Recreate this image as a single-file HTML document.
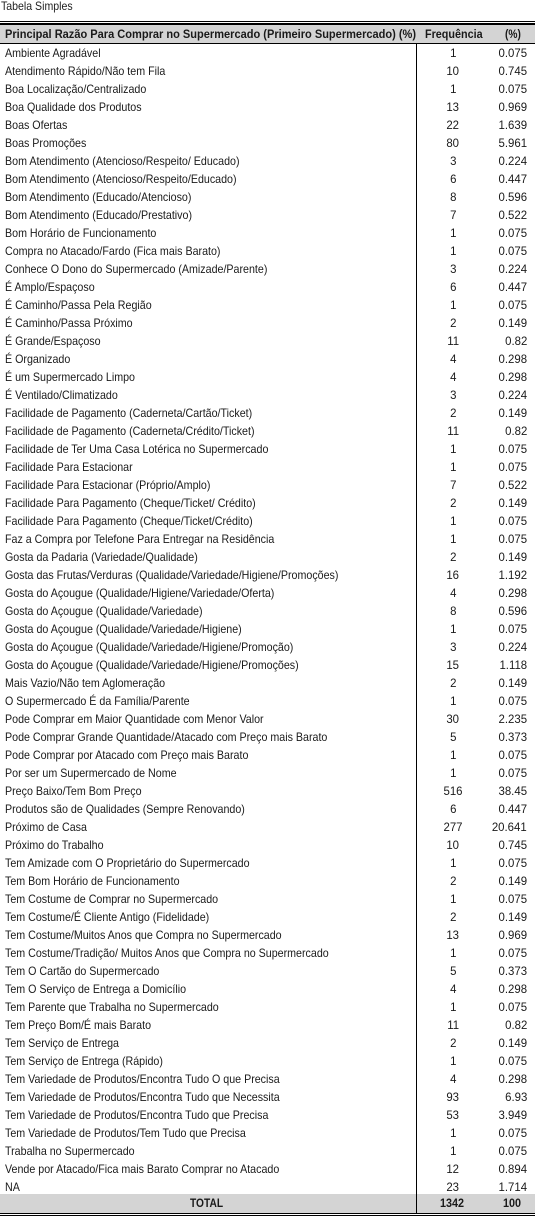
<!DOCTYPE html>
<html><head><meta charset="utf-8"><style>
html,body{margin:0;padding:0;background:#fff;width:535px;height:1216px;overflow:hidden}
body{font-family:"Liberation Sans",Arial,sans-serif;font-size:12px;color:#1a1a1a;position:relative}
.title{position:absolute;left:1px;top:-1px;line-height:14px;font-size:12px;transform:scaleX(.88);transform-origin:left;color:#222}
.dl{position:absolute;left:0;width:535px;height:1px;background:#000}
.hdr{position:absolute;left:0;top:25px;width:535px;height:18px;background:#d4d4d4;font-weight:bold}
.tot{position:absolute;left:0;top:1194px;width:535px;height:19px;background:#d4d4d4;font-weight:bold}
.vl{position:absolute;left:416px;top:43px;width:1px;height:1170px;background:#000}
table{position:absolute;left:0;top:44px;border-collapse:collapse;table-layout:fixed;width:535px}
td{height:18px;padding:0;line-height:18px;white-space:nowrap;overflow:visible;vertical-align:top}
td.a{width:411px;padding-left:5px}
td.a span,td.b span,td.c span{display:inline-block;vertical-align:top;line-height:18px;height:18px}
td.a span{transform:scaleX(.89);transform-origin:left}
td.b span{transform:scaleX(.95)}
td.c span{transform:scaleX(.95);transform-origin:right}
td.b{width:74px;text-align:center;padding-left:0}
td.c{text-align:right;padding-right:8px}
</style></head><body>
<div class="title">Tabela Simples</div>
<div class="dl" style="top:21px"></div><div class="dl" style="top:23px;height:2px"></div>
<div class="hdr">
<span style="position:absolute;left:5px;top:0;line-height:18px;display:inline-block;transform:scaleX(.92);transform-origin:left">Principal Razão Para Comprar no Supermercado (Primeiro Supermercado) (%)</span>
<span style="position:absolute;left:425px;top:0;line-height:18px;display:inline-block;transform:scaleX(.9);transform-origin:left">Frequência</span>
<span style="position:absolute;left:505px;top:0;line-height:18px;display:inline-block;transform:scaleX(.85);transform-origin:left">(%)</span>
</div>
<div class="dl" style="top:43px"></div>
<table>
<tr><td class="a"><span>Ambiente Agradável</span></td><td class="b"><span>1</span></td><td class="c"><span>0.075</span></td></tr>
<tr><td class="a"><span>Atendimento Rápido/Não tem Fila</span></td><td class="b"><span>10</span></td><td class="c"><span>0.745</span></td></tr>
<tr><td class="a"><span>Boa Localização/Centralizado</span></td><td class="b"><span>1</span></td><td class="c"><span>0.075</span></td></tr>
<tr><td class="a"><span>Boa Qualidade dos Produtos</span></td><td class="b"><span>13</span></td><td class="c"><span>0.969</span></td></tr>
<tr><td class="a"><span>Boas Ofertas</span></td><td class="b"><span>22</span></td><td class="c"><span>1.639</span></td></tr>
<tr><td class="a"><span>Boas Promoções</span></td><td class="b"><span>80</span></td><td class="c"><span>5.961</span></td></tr>
<tr><td class="a"><span>Bom Atendimento (Atencioso/Respeito/ Educado)</span></td><td class="b"><span>3</span></td><td class="c"><span>0.224</span></td></tr>
<tr><td class="a"><span>Bom Atendimento (Atencioso/Respeito/Educado)</span></td><td class="b"><span>6</span></td><td class="c"><span>0.447</span></td></tr>
<tr><td class="a"><span>Bom Atendimento (Educado/Atencioso)</span></td><td class="b"><span>8</span></td><td class="c"><span>0.596</span></td></tr>
<tr><td class="a"><span>Bom Atendimento (Educado/Prestativo)</span></td><td class="b"><span>7</span></td><td class="c"><span>0.522</span></td></tr>
<tr><td class="a"><span>Bom Horário de Funcionamento</span></td><td class="b"><span>1</span></td><td class="c"><span>0.075</span></td></tr>
<tr><td class="a"><span>Compra no Atacado/Fardo (Fica mais Barato)</span></td><td class="b"><span>1</span></td><td class="c"><span>0.075</span></td></tr>
<tr><td class="a"><span>Conhece O Dono do Supermercado (Amizade/Parente)</span></td><td class="b"><span>3</span></td><td class="c"><span>0.224</span></td></tr>
<tr><td class="a"><span>É Amplo/Espaçoso</span></td><td class="b"><span>6</span></td><td class="c"><span>0.447</span></td></tr>
<tr><td class="a"><span>É Caminho/Passa Pela Região</span></td><td class="b"><span>1</span></td><td class="c"><span>0.075</span></td></tr>
<tr><td class="a"><span>É Caminho/Passa Próximo</span></td><td class="b"><span>2</span></td><td class="c"><span>0.149</span></td></tr>
<tr><td class="a"><span>É Grande/Espaçoso</span></td><td class="b"><span>11</span></td><td class="c"><span>0.82</span></td></tr>
<tr><td class="a"><span>É Organizado</span></td><td class="b"><span>4</span></td><td class="c"><span>0.298</span></td></tr>
<tr><td class="a"><span>É um Supermercado Limpo</span></td><td class="b"><span>4</span></td><td class="c"><span>0.298</span></td></tr>
<tr><td class="a"><span>É Ventilado/Climatizado</span></td><td class="b"><span>3</span></td><td class="c"><span>0.224</span></td></tr>
<tr><td class="a"><span>Facilidade de Pagamento (Caderneta/Cartão/Ticket)</span></td><td class="b"><span>2</span></td><td class="c"><span>0.149</span></td></tr>
<tr><td class="a"><span>Facilidade de Pagamento (Caderneta/Crédito/Ticket)</span></td><td class="b"><span>11</span></td><td class="c"><span>0.82</span></td></tr>
<tr><td class="a"><span>Facilidade de Ter Uma Casa Lotérica no Supermercado</span></td><td class="b"><span>1</span></td><td class="c"><span>0.075</span></td></tr>
<tr><td class="a"><span>Facilidade Para Estacionar</span></td><td class="b"><span>1</span></td><td class="c"><span>0.075</span></td></tr>
<tr><td class="a"><span>Facilidade Para Estacionar (Próprio/Amplo)</span></td><td class="b"><span>7</span></td><td class="c"><span>0.522</span></td></tr>
<tr><td class="a"><span>Facilidade Para Pagamento (Cheque/Ticket/ Crédito)</span></td><td class="b"><span>2</span></td><td class="c"><span>0.149</span></td></tr>
<tr><td class="a"><span>Facilidade Para Pagamento (Cheque/Ticket/Crédito)</span></td><td class="b"><span>1</span></td><td class="c"><span>0.075</span></td></tr>
<tr><td class="a"><span>Faz a Compra por Telefone Para Entregar na Residência</span></td><td class="b"><span>1</span></td><td class="c"><span>0.075</span></td></tr>
<tr><td class="a"><span>Gosta da Padaria (Variedade/Qualidade)</span></td><td class="b"><span>2</span></td><td class="c"><span>0.149</span></td></tr>
<tr><td class="a"><span>Gosta das Frutas/Verduras (Qualidade/Variedade/Higiene/Promoções)</span></td><td class="b"><span>16</span></td><td class="c"><span>1.192</span></td></tr>
<tr><td class="a"><span>Gosta do Açougue (Qualidade/Higiene/Variedade/Oferta)</span></td><td class="b"><span>4</span></td><td class="c"><span>0.298</span></td></tr>
<tr><td class="a"><span>Gosta do Açougue (Qualidade/Variedade)</span></td><td class="b"><span>8</span></td><td class="c"><span>0.596</span></td></tr>
<tr><td class="a"><span>Gosta do Açougue (Qualidade/Variedade/Higiene)</span></td><td class="b"><span>1</span></td><td class="c"><span>0.075</span></td></tr>
<tr><td class="a"><span>Gosta do Açougue (Qualidade/Variedade/Higiene/Promoção)</span></td><td class="b"><span>3</span></td><td class="c"><span>0.224</span></td></tr>
<tr><td class="a"><span>Gosta do Açougue (Qualidade/Variedade/Higiene/Promoções)</span></td><td class="b"><span>15</span></td><td class="c"><span>1.118</span></td></tr>
<tr><td class="a"><span>Mais Vazio/Não tem Aglomeração</span></td><td class="b"><span>2</span></td><td class="c"><span>0.149</span></td></tr>
<tr><td class="a"><span>O Supermercado É da Família/Parente</span></td><td class="b"><span>1</span></td><td class="c"><span>0.075</span></td></tr>
<tr><td class="a"><span>Pode Comprar em Maior Quantidade com Menor Valor</span></td><td class="b"><span>30</span></td><td class="c"><span>2.235</span></td></tr>
<tr><td class="a"><span>Pode Comprar Grande Quantidade/Atacado com Preço mais Barato</span></td><td class="b"><span>5</span></td><td class="c"><span>0.373</span></td></tr>
<tr><td class="a"><span>Pode Comprar por Atacado com Preço mais Barato</span></td><td class="b"><span>1</span></td><td class="c"><span>0.075</span></td></tr>
<tr><td class="a"><span>Por ser um Supermercado de Nome</span></td><td class="b"><span>1</span></td><td class="c"><span>0.075</span></td></tr>
<tr><td class="a"><span>Preço Baixo/Tem Bom Preço</span></td><td class="b"><span>516</span></td><td class="c"><span>38.45</span></td></tr>
<tr><td class="a"><span>Produtos são de Qualidades (Sempre Renovando)</span></td><td class="b"><span>6</span></td><td class="c"><span>0.447</span></td></tr>
<tr><td class="a"><span>Próximo de Casa</span></td><td class="b"><span>277</span></td><td class="c"><span>20.641</span></td></tr>
<tr><td class="a"><span>Próximo do Trabalho</span></td><td class="b"><span>10</span></td><td class="c"><span>0.745</span></td></tr>
<tr><td class="a"><span>Tem Amizade com O Proprietário do Supermercado</span></td><td class="b"><span>1</span></td><td class="c"><span>0.075</span></td></tr>
<tr><td class="a"><span>Tem Bom Horário de Funcionamento</span></td><td class="b"><span>2</span></td><td class="c"><span>0.149</span></td></tr>
<tr><td class="a"><span>Tem Costume de Comprar no Supermercado</span></td><td class="b"><span>1</span></td><td class="c"><span>0.075</span></td></tr>
<tr><td class="a"><span>Tem Costume/É Cliente Antigo (Fidelidade)</span></td><td class="b"><span>2</span></td><td class="c"><span>0.149</span></td></tr>
<tr><td class="a"><span>Tem Costume/Muitos Anos que Compra no Supermercado</span></td><td class="b"><span>13</span></td><td class="c"><span>0.969</span></td></tr>
<tr><td class="a"><span>Tem Costume/Tradição/ Muitos Anos que Compra no Supermercado</span></td><td class="b"><span>1</span></td><td class="c"><span>0.075</span></td></tr>
<tr><td class="a"><span>Tem O Cartão do Supermercado</span></td><td class="b"><span>5</span></td><td class="c"><span>0.373</span></td></tr>
<tr><td class="a"><span>Tem O Serviço de Entrega a Domicílio</span></td><td class="b"><span>4</span></td><td class="c"><span>0.298</span></td></tr>
<tr><td class="a"><span>Tem Parente que Trabalha no Supermercado</span></td><td class="b"><span>1</span></td><td class="c"><span>0.075</span></td></tr>
<tr><td class="a"><span>Tem Preço Bom/É mais Barato</span></td><td class="b"><span>11</span></td><td class="c"><span>0.82</span></td></tr>
<tr><td class="a"><span>Tem Serviço de Entrega</span></td><td class="b"><span>2</span></td><td class="c"><span>0.149</span></td></tr>
<tr><td class="a"><span>Tem Serviço de Entrega (Rápido)</span></td><td class="b"><span>1</span></td><td class="c"><span>0.075</span></td></tr>
<tr><td class="a"><span>Tem Variedade de Produtos/Encontra Tudo O que Precisa</span></td><td class="b"><span>4</span></td><td class="c"><span>0.298</span></td></tr>
<tr><td class="a"><span>Tem Variedade de Produtos/Encontra Tudo que Necessita</span></td><td class="b"><span>93</span></td><td class="c"><span>6.93</span></td></tr>
<tr><td class="a"><span>Tem Variedade de Produtos/Encontra Tudo que Precisa</span></td><td class="b"><span>53</span></td><td class="c"><span>3.949</span></td></tr>
<tr><td class="a"><span>Tem Variedade de Produtos/Tem Tudo que Precisa</span></td><td class="b"><span>1</span></td><td class="c"><span>0.075</span></td></tr>
<tr><td class="a"><span>Trabalha no Supermercado</span></td><td class="b"><span>1</span></td><td class="c"><span>0.075</span></td></tr>
<tr><td class="a"><span>Vende por Atacado/Fica mais Barato Comprar no Atacado</span></td><td class="b"><span>12</span></td><td class="c"><span>0.894</span></td></tr>
<tr><td class="a"><span>NA</span></td><td class="b"><span>23</span></td><td class="c"><span>1.714</span></td></tr>
</table>
<div class="tot">
<span style="position:absolute;left:190px;top:0;line-height:19px;display:inline-block;transform:scaleX(.85);transform-origin:left">TOTAL</span>
<span style="position:absolute;left:440px;top:0;line-height:19px;display:inline-block;transform:scaleX(.9);transform-origin:left">1342</span>
<span style="position:absolute;left:503px;top:0;line-height:19px;display:inline-block;transform:scaleX(.9);transform-origin:left">100</span>
</div>
<div class="vl"></div>
<div class="dl" style="top:1213px;height:1px"></div><div class="dl" style="top:1215px;height:1px"></div>
</body></html>
